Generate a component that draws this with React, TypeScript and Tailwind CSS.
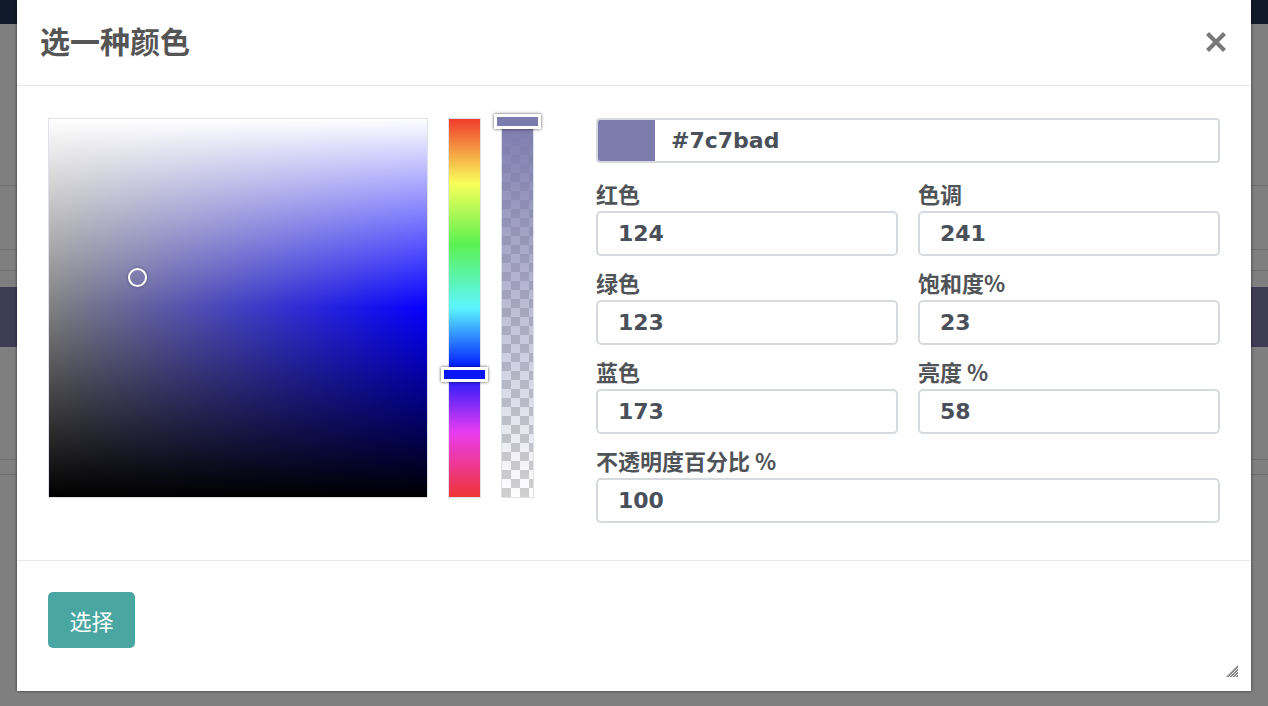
import React from "react";

const cjk = { fontFamily: '"Noto Sans CJK SC", "Noto Sans", sans-serif' };
const num = { fontFamily: '"DejaVu Sans", "Noto Sans CJK SC", sans-serif' };

interface Field {
  label: string;
  value: string;
  wide?: boolean;
}

const fields: Field[] = [
  { label: "红色", value: "124" },
  { label: "色调", value: "241" },
  { label: "绿色", value: "123" },
  { label: "饱和度%", value: "23" },
  { label: "蓝色", value: "173" },
  { label: "亮度 %", value: "58" },
  { label: "不透明度百分比 %", value: "100", wide: true },
];

function Backdrop() {
  // the page behind the dialog, dimmed by the overlay
  return (
    <div className="flex flex-col w-full h-full">
      <div className="h-[24px] bg-[#111a2a]" />
      <div className="h-[161px]" />
      <div className="h-px bg-[#6c6c6c]" />
      <div className="h-[63px]" />
      <div className="h-px bg-[#6c6c6c]" />
      <div className="h-[20px]" />
      <div className="h-px bg-[#6c6c6c]" />
      <div className="h-[16px]" />
      <div className="h-[60px] bg-[#3e3d55]" />
      <div className="h-[112px]" />
      <div className="h-px bg-[#6c6c6c]" />
      <div className="h-[14px]" />
      <div className="h-px bg-[#6c6c6c]" />
    </div>
  );
}

function SaturationBox() {
  // saturation on x, lightness on y
  return (
    <div className="relative w-[380px] h-[380px] border border-[#dde1e8] bg-[linear-gradient(to_right,#808080,hsl(241,100%,50%))]">
      <div className="absolute inset-0 bg-[linear-gradient(to_bottom,#fff,rgba(255,255,255,0)_50%,rgba(0,0,0,0)_50%,#000)]" />
      <div className="absolute left-[79px] top-[149px] w-[19px] h-[19px] rounded-full border-2 border-white shadow-[0_0_3px_rgba(0,0,0,0.4)]" />
    </div>
  );
}

function HueBar() {
  return (
    <div className="relative w-[33px] h-[380px] border border-[#dde1e8] bg-[linear-gradient(to_bottom,#f03c2c,#f9ff5a_17%,#5cf250_33%,#5cf5ff_50%,#0017ff_66%,#ea3cf0_83%,#ef3535)]">
      <div className="absolute left-[-8px] top-[248px] w-[47px] h-[15px] border-[3px] border-white bg-[#0a17f5] shadow-[0_0_3px_rgba(0,0,0,0.7)]" />
    </div>
  );
}

function AlphaBar() {
  return (
    <div className="relative w-[33px] h-[380px] border border-[#dde1e8] bg-[repeating-conic-gradient(#cfcfcf_0_25%,#ffffff_0_50%)] bg-[length:18px_18px]">
      <div className="absolute inset-0 bg-[linear-gradient(to_bottom,#7c7bad,rgba(124,123,173,0))]" />
      <div className="absolute left-[-8px] top-[-5px] w-[47px] h-[15px] border-[3px] border-white bg-[#7c7bad] shadow-[0_0_3px_rgba(0,0,0,0.7)]" />
    </div>
  );
}

function NumberField({ label, value, wide }: Field) {
  return (
    <div className={wide ? "col-span-2 flex flex-col" : "flex flex-col"}>
      <div className="h-[28px] leading-[28px] text-[22px] font-bold text-[#505357]" style={cjk}>
        {label}
      </div>
      <div className="mt-[4px] h-[45px] flex items-center px-[20px] border-2 border-[#d6d9de] rounded-[5px] text-[22px] font-bold text-[#4a5059]" style={num}>
        {value}
      </div>
    </div>
  );
}

export default function App() {
  return (
    <div className="relative w-full h-[706px] overflow-hidden bg-[#7f7f7f]">
      <Backdrop />

      {/* dialog */}
      <div className="absolute left-[17px] top-0 w-[1234px] h-[691px] bg-white flex flex-col shadow-[0_0_3px_rgba(0,0,0,0.6)]">
        <div className="h-[86px] shrink-0 flex items-center justify-between pl-[23px] pr-[25px] border-b border-[#e9e9f2]">
          <h1 className="mb-[5px] text-[30px] font-bold text-[#555555]" style={cjk}>
            选一种颜色
          </h1>
          <svg width="20" height="20" viewBox="0 0 20 20" className="mb-[2px]">
            <path d="M3 3 L17 17 M17 3 L3 17" stroke="#787878" strokeWidth="4.2" strokeLinecap="square" />
          </svg>
        </div>

        <div className="flex pt-[32px] pl-[31px] pr-[31px] pb-[37px] border-b border-[#e9e9f2]">
          <SaturationBox />
          <div className="ml-[20px]">
            <HueBar />
          </div>
          <div className="ml-[20px]">
            <AlphaBar />
          </div>

          <div className="ml-[62px] flex-1 flex flex-col">
            <div className="h-[45px] flex items-center border-2 border-[#d6d9de] rounded-[4px] overflow-hidden">
              <div className="w-[57px] h-full bg-[#7c7bad]" />
              <div className="pl-[16px] text-[22px] font-bold text-[#4a5059]" style={num}>
                #7c7bad
              </div>
            </div>
            <div className="mt-[16px] grid grid-cols-2 gap-x-[20px] gap-y-[12px]">
              {fields.map((f) => (
                <NumberField key={f.label} {...f} />
              ))}
            </div>
          </div>
        </div>

        <div className="flex-1 relative pt-[31px] pl-[31px]">
          <button className="w-[87px] h-[56px] rounded-[5px] bg-[#4aa6a1] text-white text-[22px]" style={cjk}>
            选择
          </button>
          <svg width="14" height="14" viewBox="0 0 14 14" className="absolute right-[12px] bottom-[13px]">
            <path d="M13 1 L13 13 L1 13 Z" fill="#8a8a8a" />
            <path d="M13 4 L4 13 M13 7 L7 13 M13 10 L10 13" stroke="#fff" strokeWidth="0.8" />
          </svg>
        </div>
      </div>
    </div>
  );
}
